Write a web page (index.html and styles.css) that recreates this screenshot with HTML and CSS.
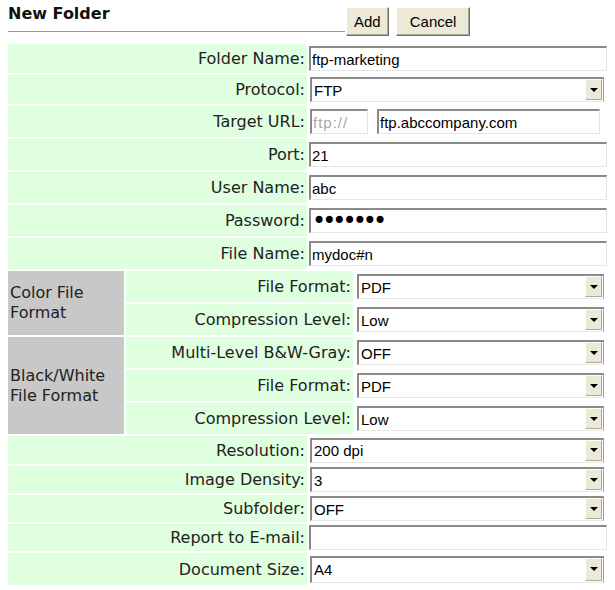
FILE: index.html
```html
<!DOCTYPE html>
<html lang="en">
<head>
  <meta charset="UTF-8" />
  <meta name="viewport" content="width=device-width, initial-scale=1.0"/>
  <title>New Folder</title>
  <link rel="stylesheet" href="styles.css">
</head>
<body>

  <div class="header">
    <h1 class="title">New Folder</h1>
    <div class="actions">
      <button type="button" class="btn">Add</button>
      <button type="button" class="btn btn-cancel">Cancel</button>
    </div>
  </div>

  <form class="folder-form">
    <!-- Connection -->
    <label class="label wide">Folder Name:</label>
    <div class="value wide"><input class="field" type="text" value="ftp-marketing" /></div>

    <label class="label wide">Protocol:</label>
    <div class="value wide">
      <span class="select-box">
        <select class="select"><option>FTP</option><option>SMB</option></select>
        <span class="arrow"><svg width="8" height="4" viewBox="0 0 8 4"><polygon points="0,0 8,0 4,4" fill="#000"/></svg></span>
      </span>
    </div>

    <label class="label wide">Target URL:</label>
    <div class="value wide url">
      <input class="field prefix" type="text" value="ftp://" disabled />
      <input class="field host" type="text" value="ftp.abccompany.com" />
    </div>

    <label class="label wide">Port:</label>
    <div class="value wide"><input class="field" type="text" value="21" /></div>

    <label class="label wide">User Name:</label>
    <div class="value wide"><input class="field" type="text" value="abc" /></div>

    <label class="label wide">Password:</label>
    <div class="value wide"><input class="field password" type="password" value="1234567" /></div>

    <label class="label wide">File Name:</label>
    <div class="value wide"><input class="field" type="text" value="mydoc#n" /></div>

    <!-- Color File Format -->
    <div class="section rows-2">Color File Format</div>
    <label class="label sub">File Format:</label>
    <div class="value sub">
      <span class="select-box">
        <select class="select"><option>PDF</option><option>TIFF</option></select>
        <span class="arrow"><svg width="8" height="4" viewBox="0 0 8 4"><polygon points="0,0 8,0 4,4" fill="#000"/></svg></span>
      </span>
    </div>

    <label class="label sub">Compression Level:</label>
    <div class="value sub">
      <span class="select-box">
        <select class="select"><option>Low</option><option>High</option></select>
        <span class="arrow"><svg width="8" height="4" viewBox="0 0 8 4"><polygon points="0,0 8,0 4,4" fill="#000"/></svg></span>
      </span>
    </div>

    <!-- Black/White File Format -->
    <div class="section rows-3">Black/White File Format</div>
    <label class="label sub">Multi-Level B&amp;W-Gray:</label>
    <div class="value sub">
      <span class="select-box">
        <select class="select"><option>OFF</option><option>ON</option></select>
        <span class="arrow"><svg width="8" height="4" viewBox="0 0 8 4"><polygon points="0,0 8,0 4,4" fill="#000"/></svg></span>
      </span>
    </div>

    <label class="label sub">File Format:</label>
    <div class="value sub">
      <span class="select-box">
        <select class="select"><option>PDF</option><option>TIFF</option></select>
        <span class="arrow"><svg width="8" height="4" viewBox="0 0 8 4"><polygon points="0,0 8,0 4,4" fill="#000"/></svg></span>
      </span>
    </div>

    <label class="label sub">Compression Level:</label>
    <div class="value sub">
      <span class="select-box">
        <select class="select"><option>Low</option><option>High</option></select>
        <span class="arrow"><svg width="8" height="4" viewBox="0 0 8 4"><polygon points="0,0 8,0 4,4" fill="#000"/></svg></span>
      </span>
    </div>

    <!-- Scan settings -->
    <label class="label wide">Resolution:</label>
    <div class="value wide">
      <span class="select-box">
        <select class="select"><option>200 dpi</option><option>300 dpi</option></select>
        <span class="arrow"><svg width="8" height="4" viewBox="0 0 8 4"><polygon points="0,0 8,0 4,4" fill="#000"/></svg></span>
      </span>
    </div>

    <label class="label wide">Image Density:</label>
    <div class="value wide">
      <span class="select-box">
        <select class="select"><option>3</option><option>4</option></select>
        <span class="arrow"><svg width="8" height="4" viewBox="0 0 8 4"><polygon points="0,0 8,0 4,4" fill="#000"/></svg></span>
      </span>
    </div>

    <label class="label wide">Subfolder:</label>
    <div class="value wide">
      <span class="select-box">
        <select class="select"><option>OFF</option><option>ON</option></select>
        <span class="arrow"><svg width="8" height="4" viewBox="0 0 8 4"><polygon points="0,0 8,0 4,4" fill="#000"/></svg></span>
      </span>
    </div>

    <label class="label wide">Report to E-mail:</label>
    <div class="value wide"><input class="field" type="text" value="" /></div>

    <label class="label wide">Document Size:</label>
    <div class="value wide">
      <span class="select-box tall">
        <select class="select"><option>A4</option><option>Letter</option></select>
        <span class="arrow"><svg width="8" height="4" viewBox="0 0 8 4"><polygon points="0,0 8,0 4,4" fill="#000"/></svg></span>
      </span>
    </div>
  </form>

</body>
</html>
```

FILE: styles.css
```css
body {
  font-family: "DejaVu Sans", Verdana, sans-serif;
  font-size: 16px;
  color: #222;
  background: #fff;
  margin: 0;
  padding: 0 8px;
}

/* Header */
.header {
  display: flex;
  align-items: flex-start;
}

.title {
  width: 337px;
  margin: 0;
  padding: 4px 0 8px;
  font-size: 16px;
  line-height: 19px;
  font-weight: bold;
  color: #111;
  border-bottom: 1px solid #9a9a9a;
}

.actions {
  display: flex;
  gap: 7px;
  margin-top: 7px;
  margin-left: 1px;
}

.btn {
  height: 29px;
  padding: 0 7px;
  font-family: "Liberation Sans", Arial, sans-serif;
  font-size: 15px;
  color: #000;
  background: #ece9d8;
  border: 1px solid;
  border-color: #fff #716f64 #716f64 #fff;
  box-shadow: inset -1px -1px 0 #aca899;
}

.btn-cancel {
  padding: 0 13px;
}

/* Form grid */
.folder-form {
  display: grid;
  grid-template-columns: 116px 181px 44px 252px;
  grid-template-rows: 29px 29px repeat(10, 31px) 28px 27px 27px 27px 32px;
  gap: 2px;
  width: 599px;
  margin-top: 8px;
}

.label {
  display: flex;
  align-items: center;
  justify-content: flex-end;
  padding-right: 2px;
  background: #e0ffe0;
  white-space: nowrap;
}

.label.wide { grid-column: 1 / 3; }
.label.sub { grid-column: 2 / 4; }

.value {
  display: flex;
  align-items: center;
  background: #fff;
}

.value.wide { grid-column: 3 / 5; }
.value.sub { grid-column: 4 / 5; padding-left: 1px; }

.section {
  grid-column: 1 / 2;
  display: flex;
  align-items: center;
  padding: 0 8px 0 2px;
  line-height: 20px;
  background: #c8c8c8;
}

.section.rows-2 { grid-row: span 2; }
.section.rows-3 { grid-row: span 3; }

/* Inputs */
.field {
  width: 100%;
  height: 25px;
  box-sizing: border-box;
  padding: 0 1px;
  font-family: "Liberation Sans", Arial, sans-serif;
  font-size: 15px;
  color: #000;
  background: #fff;
  border-style: solid;
  border-width: 2px 1px 1px 2px;
  border-color: #8a8a8a #e6e6e6 #e6e6e6 #8a8a8a;
  outline: none;
}

.url {
  gap: 9px;
}

.field.prefix {
  width: 58px;
  flex: none;
  margin-left: 1px;
  color: #a8a8a8;
  letter-spacing: 1px;
}

.field.host {
  width: auto;
  flex: 1;
  margin-right: 7px;
}

.field.password {
  font-family: "DejaVu Sans", sans-serif;
  font-size: 24px;
  letter-spacing: -4px;
}

/* Select with drop button */
.select-box {
  position: relative;
  flex: 1;
  height: 25px;
  margin: 0 3px 0 1px;
}

.select-box.tall {
  height: 27px;
}

.select {
  appearance: none;
  -webkit-appearance: none;
  width: 100%;
  height: 100%;
  box-sizing: border-box;
  padding: 0 20px 0 2px;
  font-family: "Liberation Sans", Arial, sans-serif;
  font-size: 15px;
  color: #000;
  background: #fff;
  border-style: solid;
  border-width: 2px 1px 1px 2px;
  border-color: #8a8a8a #a0a0a0 #e6e6e6 #8a8a8a;
  border-radius: 0;
  outline: none;
}

.arrow {
  position: absolute;
  top: 2px;
  right: 2px;
  bottom: 2px;
  width: 17px;
  display: flex;
  align-items: center;
  justify-content: center;
  box-sizing: border-box;
  background: #ece9d8;
  border: 1px solid;
  border-color: #fff #aca899 #aca899 #fff;
  pointer-events: none;
}
```
